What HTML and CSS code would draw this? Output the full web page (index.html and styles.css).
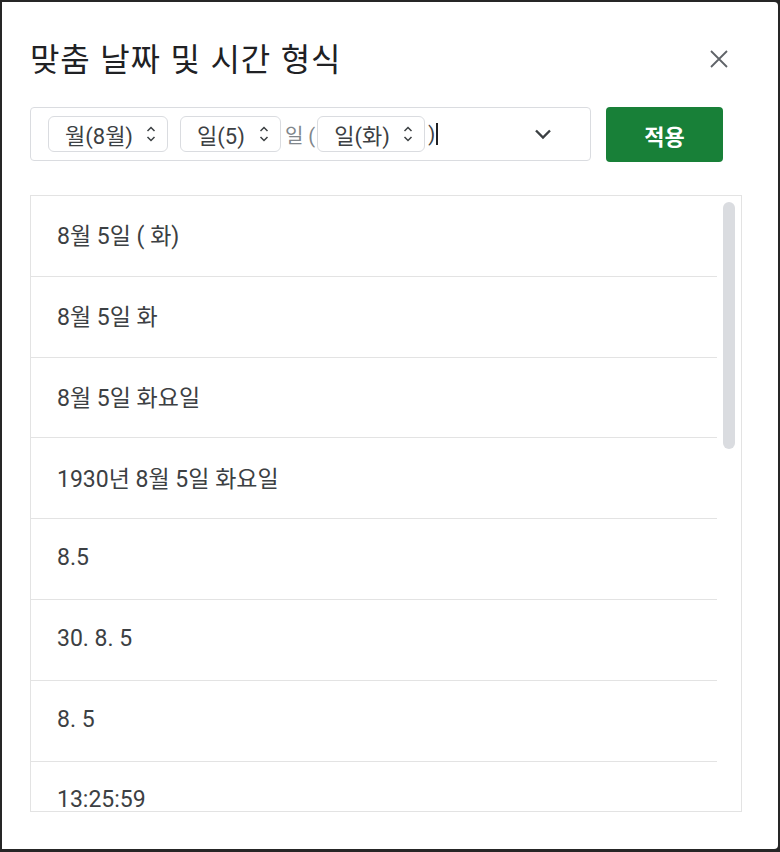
FILE: index.html
```html
<!DOCTYPE html>
<html lang="ko">
<head>
<meta charset="utf-8">
<title>맞춤 날짜 및 시간 형식</title>
<link rel="stylesheet" href="styles.css">
</head>
<body>
<div class="frame">
  <div class="dialog">
    <header class="head">
      <h1 class="title">맞춤 날짜 및 시간 형식</h1>
      <button class="close" aria-label="닫기">
        <svg width="20" height="20" viewBox="0 0 20 20"><path d="M2 2 L18 18 M18 2 L2 18" stroke="#5f6368" stroke-width="1.8" fill="none"/></svg>
      </button>
    </header>
    <div class="controls">
      <div class="field">
        <div class="tokens">
          <span class="chip chip-m">월(8월)<svg class="updown" width="10" height="18" viewBox="0 0 10 18"><path d="M1.5 6 L5 2.5 L8.5 6 M1.5 12 L5 15.5 L8.5 12" stroke="#3c4043" stroke-width="1.5" fill="none"/></svg></span>
          <span class="chip chip-d">일(5)<svg class="updown" width="10" height="18" viewBox="0 0 10 18"><path d="M1.5 6 L5 2.5 L8.5 6 M1.5 12 L5 15.5 L8.5 12" stroke="#3c4043" stroke-width="1.5" fill="none"/></svg></span>
          <span class="lit">일 (</span>
          <span class="chip chip-w">일(화)<svg class="updown" width="10" height="18" viewBox="0 0 10 18"><path d="M1.5 6 L5 2.5 L8.5 6 M1.5 12 L5 15.5 L8.5 12" stroke="#3c4043" stroke-width="1.5" fill="none"/></svg></span>
          <span class="lit lit-end">)</span><span class="caret"></span>
        </div>
        <svg class="chev" width="18" height="12" viewBox="0 0 18 12"><path d="M2 2.5 L9 9.5 L16 2.5" stroke="#3c4043" stroke-width="2.4" fill="none"/></svg>
      </div>
      <button class="apply">적용</button>
    </div>
    <div class="list">
      <div class="rows">
        <div class="row">8월 5일 ( 화)</div>
        <div class="row">8월 5일 화</div>
        <div class="row">8월 5일 화요일</div>
        <div class="row">1930년 8월 5일 화요일</div>
        <div class="row">8.5</div>
        <div class="row">30. 8. 5</div>
        <div class="row">8. 5</div>
        <div class="row">13:25:59</div>
      </div>
      <div class="track"><div class="thumb"></div></div>
    </div>
  </div>
</div>
</body>
</html>
```

FILE: styles.css
```css
* { box-sizing: border-box; }
html, body { margin: 0; padding: 0; }
body {
  background: #262626;
  width: 780px;
  height: 852px;
  overflow: hidden;
  font-family: Roboto, "Noto Sans CJK KR", sans-serif;
  color: #3c4043;
}
.frame {
  margin: 2px 2px 3px 2px;
  width: 776px;
  height: 847px;
  background: #ffffff;
  border-radius: 0 4px 4px 0;
  overflow: hidden;
}
.dialog {
  padding: 37px 36px 0 28px;
}
.head {
  display: flex;
  align-items: center;
  justify-content: space-between;
  height: 40px;
}
.title {
  margin: 0;
  font-family: "Noto Sans CJK KR", sans-serif;
  font-weight: 400;
  font-size: 32px;
  line-height: 40px;
  color: #202124;
  letter-spacing: 0.8px;
  position: relative;
  top: -2px;
}
.close {
  border: 0;
  background: none;
  padding: 0;
  width: 20px;
  height: 20px;
  margin-right: 13px;
  display: flex;
}
.controls {
  margin-top: 28px;
  display: flex;
  gap: 15px;
  height: 54px;
}
.field {
  width: 561px;
  height: 54px;
  border: 1px solid #dadce0;
  border-radius: 4px;
  display: flex;
  align-items: center;
  justify-content: space-between;
  padding: 0 38px 0 17px;
}
.tokens {
  display: flex;
  align-items: center;
}
.chip {
  height: 36px;
  border: 1px solid #dadce0;
  border-radius: 6px;
  display: flex;
  align-items: center;
  justify-content: space-between;
  padding: 0 11px 0 16px;
  font-size: 22px;
  color: #3c4043;
}
.chip-m { width: 120px; margin-right: 12px; }
.chip-d { width: 101px; }
.chip-w { width: 108px; }
.updown { display: block; flex: none; }
.lit {
  font-size: 20px;
  color: #80868b;
  margin: 0 2px 0 4px;
}
.lit-end {
  color: #3c4043;
  margin: 0 1px 0 3px;
}
.caret {
  width: 1.5px;
  height: 22px;
  background: #202124;
}
.chev { display: block; }
.apply {
  width: 117px;
  height: 55px;
  border: 0;
  border-radius: 4px;
  background: #188038;
  color: #ffffff;
  font-family: "Noto Sans CJK KR", sans-serif;
  font-weight: 700;
  font-size: 22px;
  padding: 0;
}
.list {
  margin-top: 34px;
  width: 712px;
  height: 617px;
  border: 1px solid #e3e3e3;
  display: flex;
  overflow: hidden;
}
.rows {
  flex: 1;
}
.row {
  height: 80.8px;
  border-bottom: 1px solid #e3e3e3;
  display: flex;
  align-items: center;
  padding-left: 26px;
  padding-bottom: 3px;
  font-size: 23px;
  color: #3c4043;
}
.track {
  width: 24px;
  flex: none;
  padding: 6px 6px 0 6px;
}
.thumb {
  width: 12px;
  height: 247px;
  border-radius: 6px;
  background: #dadce0;
}
```
